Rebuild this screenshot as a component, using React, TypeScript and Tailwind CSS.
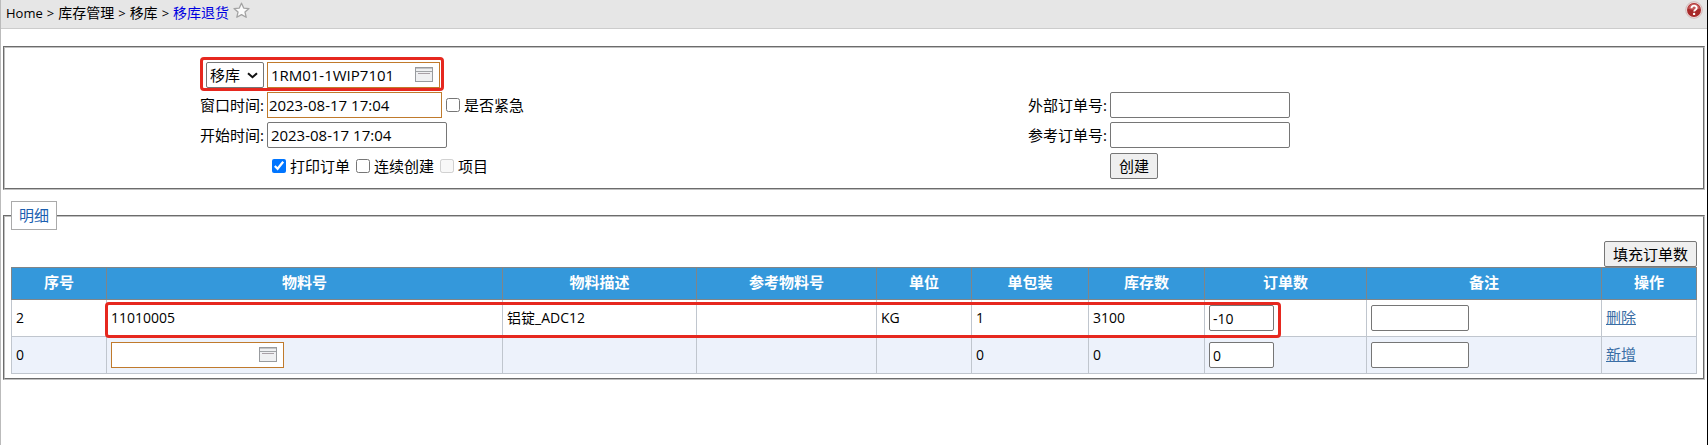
import { useState } from "react";
import type { ReactNode } from "react";
import clsx from "clsx";

interface DetailRow {
  seq: number;
  item: string;
  desc: string;
  unit: string;
  pack: string;
  stock: string;
  qty: string;
  action: string;
  isNew?: boolean;
}

const rows: DetailRow[] = [
  { seq: 2, item: "11010005", desc: "铝锭_ADC12", unit: "KG", pack: "1", stock: "3100", qty: "-10", action: "删除" },
  { seq: 0, item: "", desc: "", unit: "", pack: "0", stock: "0", qty: "0", action: "新增", isNew: true },
];

const columns = [
  { title: "序号", width: "w-[95px]" },
  { title: "物料号", width: "w-[396px]" },
  { title: "物料描述", width: "w-[194px]" },
  { title: "参考物料号", width: "w-[180px]" },
  { title: "单位", width: "w-[95px]" },
  { title: "单包装", width: "w-[117px]" },
  { title: "库存数", width: "w-[116px]" },
  { title: "订单数", width: "w-[162px]" },
  { title: "备注", width: "w-[235px]" },
  { title: "操作", width: "w-[95px]" },
];

const inputBase = "h-[26px] border bg-white px-[3px] text-black focus:outline-none";
const plainInput = clsx(inputBase, "rounded-xs border-[#767676]");
const requiredInput = clsx(inputBase, "border-[#c07a2c]");
const buttonClass = "h-[26px] rounded-xs border border-[#767676] bg-[#efefef] px-2 leading-5";
const fieldsetClass = "border-2 border-[#c0c0c0] px-1.5 [border-style:groove]";

function StarIcon() {
  return (
    <svg width="17" height="17" viewBox="0 0 17 17" aria-hidden="true">
      <path
        d="M8.5 1.2l2.2 4.9 5.3.5-4 3.5 1.2 5.2-4.7-2.7-4.7 2.7L5 10.1l-4-3.5 5.3-.5z"
        fill="#fbfbfb"
        stroke="#a3a3a3"
        strokeWidth="1.3"
        strokeLinejoin="round"
      />
    </svg>
  );
}

function HelpIcon() {
  return (
    <svg width="18" height="18" viewBox="0 0 18 18" aria-hidden="true">
      <circle cx="9" cy="9" r="8.3" fill="#f0dada" stroke="#c9b4b4" strokeWidth="0.8" />
      <circle cx="9" cy="9" r="7" fill="#a82a2a" />
      <path d="M3 7.5a6.2 6.2 0 0 1 12 0c-3.5 1.8-8.5 1.8-12 0z" fill="#c45a5a" />
      <path
        d="M6.5 7.2c0-3.4 5.2-3.3 5.2-.3 0 1.8-2.5 1.8-2.5 3.6"
        fill="none"
        stroke="#fff"
        strokeWidth="1.9"
      />
      <circle cx="9.1" cy="12.9" r="1.2" fill="#fff" />
    </svg>
  );
}

function PickerIcon() {
  return (
    <svg width="18" height="15" viewBox="0 0 18 15" aria-hidden="true">
      <rect x="0.5" y="0.5" width="17" height="14" fill="#eff0f2" stroke="#989b9f" />
      <path d="M1 1.5h16" stroke="#c3c5c8" />
      <path d="M1 4.5h16" stroke="#a0a3a6" />
      <path d="M3 6.5h12" stroke="#a8a0a6" />
    </svg>
  );
}

function PickerInput({ label, initial }: { label: string; initial: string }) {
  const [value, setValue] = useState(initial);
  return (
    <div className="relative w-[173px]">
      <input
        type="text"
        aria-label={label}
        value={value}
        onChange={(e) => setValue(e.target.value)}
        className={clsx(requiredInput, "block w-full pr-7")}
      />
      <button type="button" aria-label="选择" className="absolute top-[5px] right-[7px]">
        <PickerIcon />
      </button>
    </div>
  );
}

function Check({ children, checked, disabled }: { children: ReactNode; checked?: boolean; disabled?: boolean }) {
  return (
    <label className="flex items-center gap-1">
      <input type="checkbox" defaultChecked={checked} disabled={disabled} className="size-3.5" />
      <span>{children}</span>
    </label>
  );
}

function Label({ htmlFor, children }: { htmlFor: string; children: ReactNode }) {
  return (
    <label htmlFor={htmlFor} className="text-right">
      {children}
    </label>
  );
}

function Breadcrumb() {
  return (
    <header className="flex h-[29px] items-start justify-between border-b border-[#ccc] bg-[#e6e6e6] pr-1 pl-[5px]">
      <nav className="flex items-center gap-1 text-sm leading-[26px]">
        <a href="#home" className="text-[13px]">Home</a>
        <span className="text-[13px]">&gt;</span>
        <a href="#stock">库存管理</a>
        <span className="text-[13px]">&gt;</span>
        <a href="#transfer">移库</a>
        <span className="text-[13px]">&gt;</span>
        <a href="#return" className="text-[#0000e0]">移库退货</a>
        <button type="button" aria-label="收藏" className="self-start pt-0.5">
          <StarIcon />
        </button>
      </nav>
      <button type="button" aria-label="帮助" className="pt-px">
        <HelpIcon />
      </button>
    </header>
  );
}

function OrderForm() {
  return (
    <fieldset className={clsx(fieldsetClass, "pt-3.5 pb-[9px]")}>
      <div className="grid grid-cols-[3fr_7fr_3fr_7fr] items-center gap-y-1">
        <div className="flex justify-end">
          <div className="relative">
            <select
              aria-label="类型"
              className="block h-[26px] w-[58px] appearance-none rounded-xs border border-[#767676] bg-white pl-[3px]"
            >
              <option>移库</option>
            </select>
            <svg
              width="11"
              height="7"
              viewBox="0 0 11 7"
              className="pointer-events-none absolute top-[10px] right-[6px]"
              aria-hidden="true"
            >
              <path d="M1 1.2l4.5 4 4.500-4" fill="none" stroke="#111" strokeWidth="2" />
            </svg>
          </div>
        </div>
        <div className="relative pl-[3px]">
          <PickerInput label="路线" initial="1RM01-1WIP7101" />
          <div className="pointer-events-none absolute -top-[5px] -left-16 h-[34px] w-[244px] rounded-sm border-3 border-[#e6281f]" />
        </div>
        <div className="col-span-2" />

        <Label htmlFor="window-time">窗口时间:</Label>
        <div className="flex items-center gap-1 pl-[3px]">
          <input
            id="window-time"
            type="text"
            defaultValue="2023-08-17 17:04"
            className={clsx(requiredInput, "w-[175px] px-px")}
          />
          <Check>是否紧急</Check>
        </div>
        <Label htmlFor="ext-order">外部订单号:</Label>
        <div className="flex pl-[3px]">
          <input id="ext-order" type="text" className={clsx(plainInput, "w-[180px]")} />
        </div>

        <Label htmlFor="start-time">开始时间:</Label>
        <div className="flex pl-[3px]">
          <input
            id="start-time"
            type="text"
            defaultValue="2023-08-17 17:04"
            className={clsx(plainInput, "w-[180px]")}
          />
        </div>
        <Label htmlFor="ref-order">参考订单号:</Label>
        <div className="flex pl-[3px]">
          <input id="ref-order" type="text" className={clsx(plainInput, "w-[180px]")} />
        </div>

        <div className="col-start-2 flex items-center gap-1.5 pt-px pl-2">
          <Check checked>打印订单</Check>
          <Check>连续创建</Check>
          <Check disabled>项目</Check>
        </div>
        <div className="col-start-4 flex pt-px pl-[3px]">
          <button type="button" className={buttonClass}>创建</button>
        </div>
      </div>
    </fieldset>
  );
}

function DetailTable() {
  return (
    <div className="relative">
      <table className="w-full table-fixed border-collapse text-left text-sm">
        <colgroup>
          {columns.map((c) => (
            <col key={c.title} className={c.width} />
          ))}
        </colgroup>
        <thead>
          <tr className="h-8 bg-[#3498db] text-[15px] text-white">
            {columns.map((c) => (
              <th key={c.title} className="border border-[#808588] pb-px text-center font-bold">
                {c.title}
              </th>
            ))}
          </tr>
        </thead>
        <tbody className="[&_td]:border [&_td]:border-[#c0c6ce] [&_td]:px-1 [&_td]:py-[5px]">
          {rows.map((row) => (
            <tr key={row.seq} className={row.isNew ? "bg-[#edf2fb]" : "bg-white"}>
              <td>{row.seq}</td>
              <td>{row.isNew ? <PickerInput label="物料号" initial="" /> : row.item}</td>
              <td>{row.desc}</td>
              <td />
              <td>{row.unit}</td>
              <td>{row.pack}</td>
              <td>{row.stock}</td>
              <td>
                <input
                  type="text"
                  aria-label="订单数"
                  defaultValue={row.qty}
                  className={clsx(plainInput, "block w-[65px]")}
                />
              </td>
              <td>
                <input type="text" aria-label="备注" className={clsx(plainInput, "block w-[98px]")} />
              </td>
              <td>
                <a href="#action" className="text-[15px] text-[#3a6ea5] underline">{row.action}</a>
              </td>
            </tr>
          ))}
        </tbody>
      </table>
      {/* highlight around the returned item */}
      <div className="pointer-events-none absolute top-[35px] right-[24.7%] left-[5.6%] h-9 rounded-sm border-3 border-[#e6281f]" />
    </div>
  );
}

export default function App() {
  return (
    <div className="min-h-screen border-r border-l border-r-black border-l-[#bbb] bg-white font-['Open_Sans','Noto_Sans_CJK_SC',sans-serif] text-[15px] leading-5 text-black">
      <Breadcrumb />
      <main className="flex flex-col gap-[11px] px-0.5 pt-[17px]">
        <OrderForm />
        <fieldset className={clsx(fieldsetClass, "min-w-0 pb-1")}>
          <legend className="h-[29px] border border-[#aaa] bg-white px-[7px] leading-[27px] text-[#1b5fb0]">明细</legend>
          <div className="flex justify-end pt-[11px]">
            <button type="button" className={buttonClass}>填充订单数</button>
          </div>
          <DetailTable />
        </fieldset>
      </main>
    </div>
  );
}
